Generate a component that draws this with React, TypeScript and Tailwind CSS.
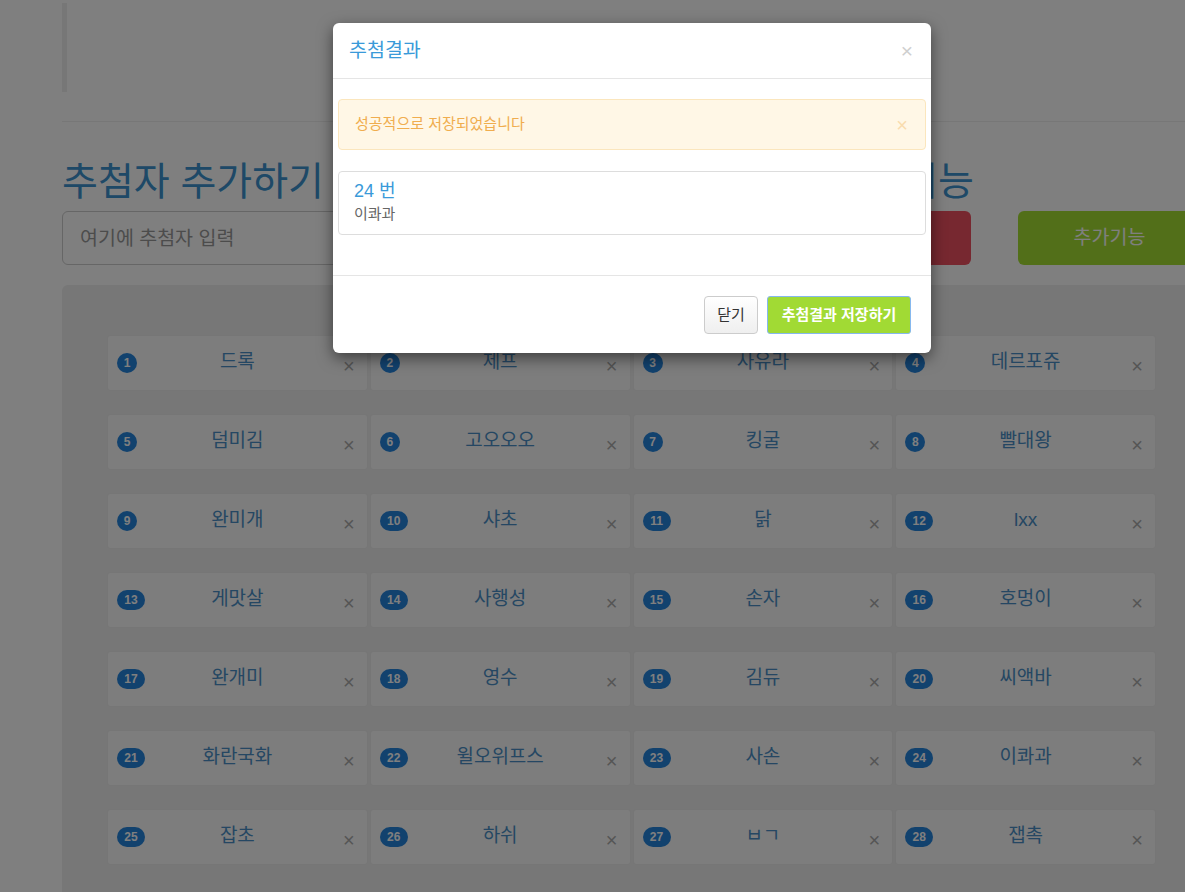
import React from 'react';

const people = [
  '드록', '제프', '사유라', '데르포쥬',
  '덤미김', '고오오오', '킹굴', '빨대왕',
  '완미개', '샤초', '닭', 'lxx',
  '게맛살', '사행성', '손자', '호멍이',
  '완개미', '영수', '김듀', '씨액바',
  '화란국화', '윌오위프스', '사손', '이콰과',
  '잡초', '하쉬', 'ㅂㄱ', '잽촉',
];

const font = 'font-["Liberation_Sans","Noto_Sans_CJK_KR",sans-serif]';

export default function App() {
  return (
    <div className={`relative h-[892px] w-full overflow-hidden bg-white ${font}`}>
      {/* page under the modal */}
      <div className="w-[1201px] pl-[62px]">
        <div className="mt-[3px] h-[89px] border-l-[5px] border-[#eeeeee]"></div>
        <hr className="mt-[29px] border-t border-[#eeeeee]" />

        <h1 className="mt-[38px] whitespace-nowrap text-[39px] leading-[44px] text-[#3d93cf]">
          추첨자 추가하기 및 무작위 추첨하기 결과 저장 추가 기능
        </h1>

        <div className="mt-[7px] flex h-[54px]">
          <input
            className="h-full flex-1 rounded-[6px] border border-[#cccccc] px-[17px] text-[19.5px] placeholder:text-[#999999]"
            placeholder="여기에 추첨자 입력"
          />
          <button className="ml-[10px] h-full w-[190px] rounded-[6px] bg-[#ef5160] text-[19.5px] text-white">
            추첨하기
          </button>
          <button className="ml-[47px] h-full w-[183px] rounded-[6px] bg-[#a4df33] text-[19.5px] text-white">
            추가기능
          </button>
        </div>

        {/* Drawing list */}
        <div className="mt-[20px] h-[700px] rounded-[6px] bg-[#eeeeee] px-[45px] pt-[50px]">
          <div className="grid grid-cols-4 gap-x-[2px] gap-y-[23px]">
            {people.map((name, i) => (
              <div
                key={i}
                className="grid h-[56px] grid-cols-[44px_1fr_44px] items-center rounded-[3px] border border-[#ececec] bg-[#fafafa]"
              >
                <div className="pl-[9px]">
                  <span
                    className={`flex h-[20px] items-center justify-center rounded-full bg-[#2484dc] text-[12px] font-bold text-white ${
                      i < 9 ? 'w-[20px]' : 'w-[28px]'
                    }`}
                  >
                    {i + 1}
                  </span>
                </div>
                <div className="-mt-[2px] text-center text-[19px] text-[#4a8fc6]">{name}</div>
                <div className="mt-[6px] pr-[12px] text-right text-[20px] leading-none text-[#aaaaaa]">×</div>
              </div>
            ))}
          </div>
        </div>
      </div>

      {/* backdrop */}
      <div className="absolute inset-0 bg-black/50"></div>

      {/* modal */}
      <div className="absolute left-[333px] top-[23px] w-[598px] rounded-[6px] bg-white shadow-[0_5px_15px_rgba(0,0,0,0.5)]">
        <div className="flex h-[56px] items-center justify-between border-b border-[#e5e5e5] pl-[16px] pr-[18px]">
          <h4 className="text-[19.5px] text-[#3a9ad9]">추첨결과</h4>
          <span className="text-[21px] leading-none text-[#cfcfcf]">×</span>
        </div>

        <div className="px-[5px] pb-[40px] pt-[20px]">
          <div className="flex h-[51px] items-center justify-between rounded-[4px] border border-[#fbe6bd] bg-[#fff7e6] pl-[16px] pr-[17px]">
            <span className="text-[15px] text-[#f0ad4e]">성공적으로 저장되었습니다</span>
            <span className="text-[20px] leading-none text-[#f9dcae]">×</span>
          </div>

          <div className="mt-[21px] h-[64px] rounded-[4px] border border-[#dddddd] px-[15px] pt-[7px]">
            <div className="text-[18px] leading-[24px] text-[#3a9ad9]">24 번</div>
            <div className="text-[15px] leading-[21px] text-[#666666]">이콰과</div>
          </div>
        </div>

        <div className="flex justify-end gap-[9px] border-t border-[#e5e5e5] pb-[19px] pr-[20px] pt-[20px]">
          <button className="h-[38px] w-[54px] rounded-[4px] border border-[#cccccc] bg-gradient-to-b from-white to-[#efefef] text-[15px] text-[#333333]">
            닫기
          </button>
          <button className="h-[38px] w-[144px] rounded-[3px] border border-[#86b8ee] bg-[#a1da34] text-[15px] font-bold text-white">
            추첨결과 저장하기
          </button>
        </div>
      </div>
    </div>
  );
}
